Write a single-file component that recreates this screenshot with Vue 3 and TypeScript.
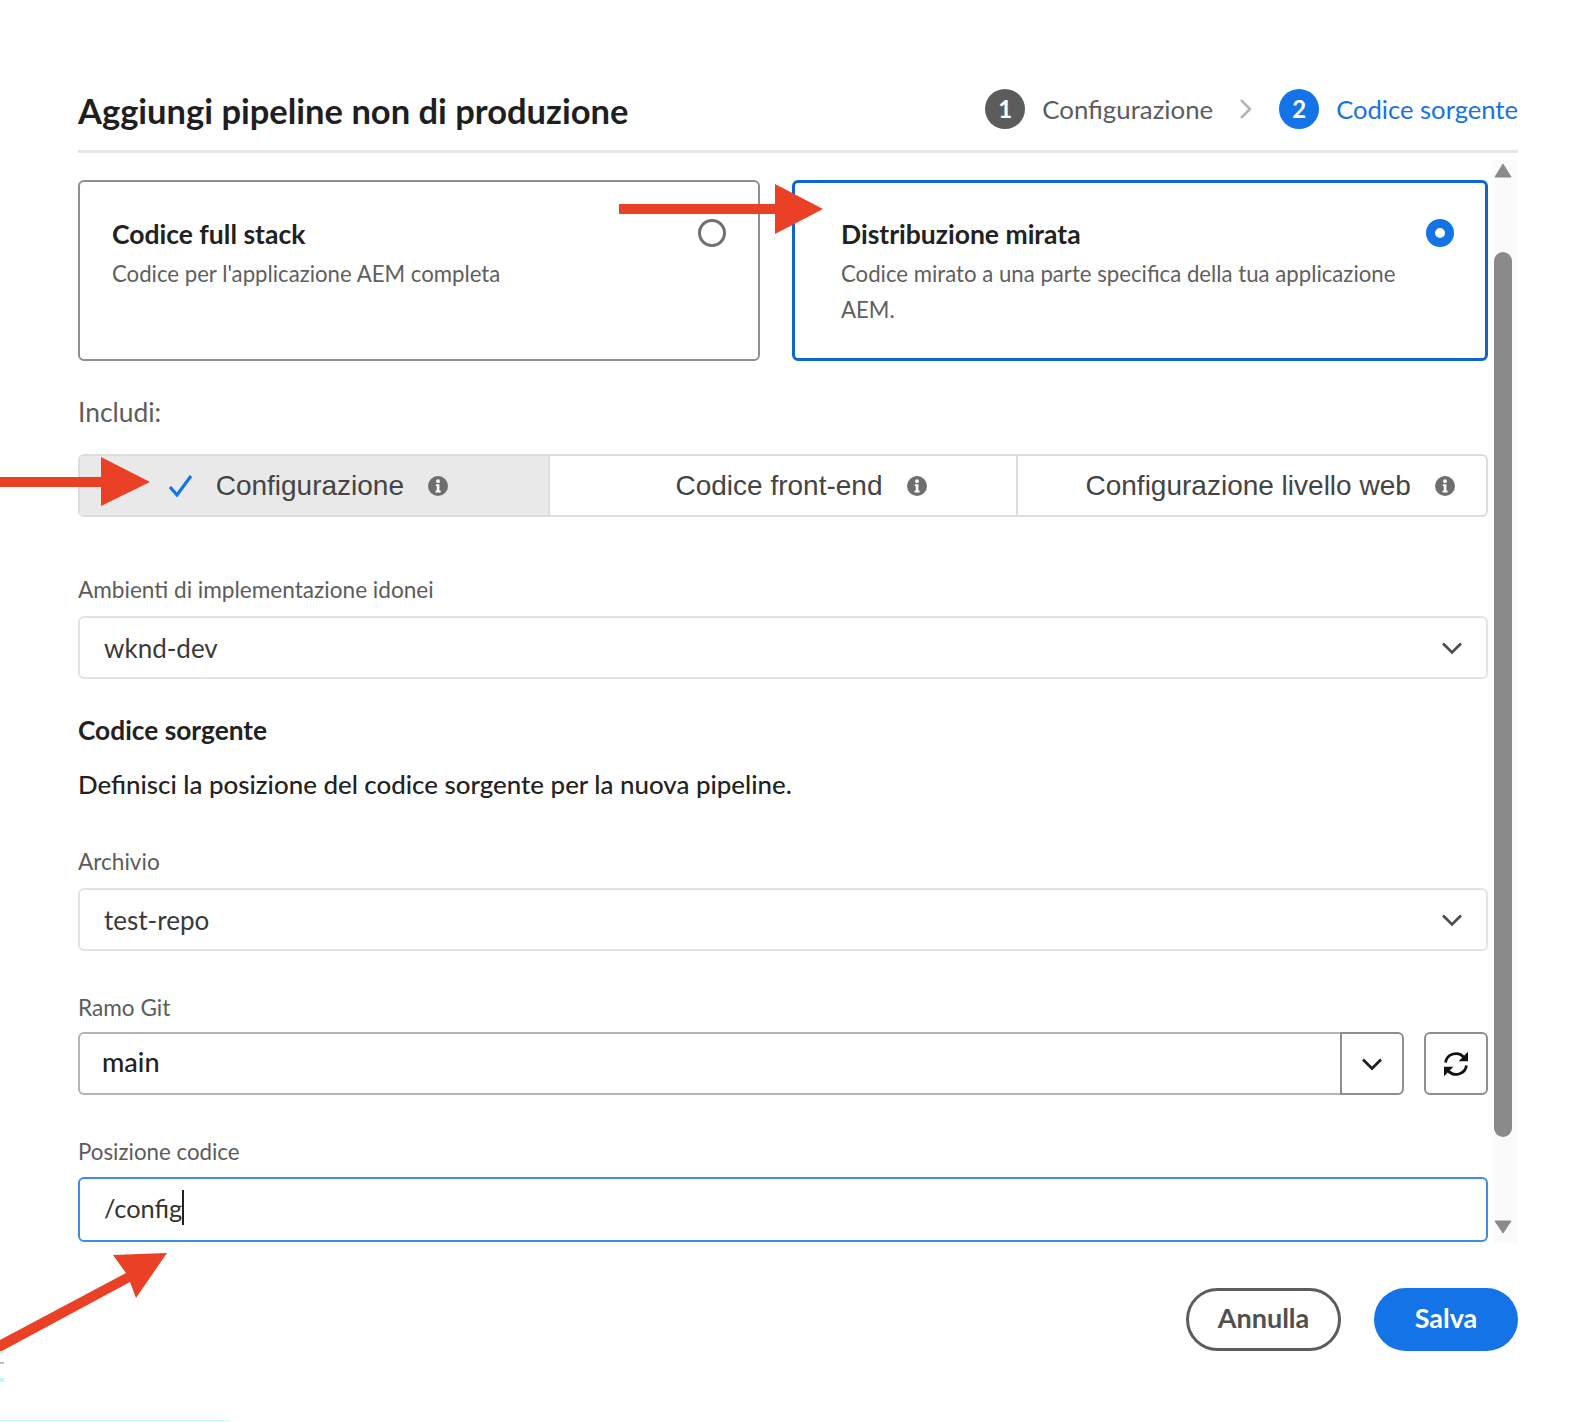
<script setup lang="ts">
interface Segment {
  label: string
  selected: boolean
}

const segments: Segment[] = [
  { label: 'Configurazione', selected: true },
  { label: 'Codice front-end', selected: false },
  { label: 'Configurazione livello web', selected: false }
]
</script>

<template>
  <div class="page">
    <header class="head">
      <h1 class="title">Aggiungi pipeline non di produzione</h1>
      <div class="steps">
        <span class="num">1</span>
        <span class="step-label">Configurazione</span>
        <svg class="step-sep" width="14" height="22" viewBox="0 0 14 22">
          <path d="M2 2l9 9-9 9" fill="none" stroke="#b5b5b5" stroke-width="2.6" />
        </svg>
        <span class="num active">2</span>
        <span class="step-label active">Codice sorgente</span>
      </div>
    </header>

    <div class="scroll">
      <div class="content">
        <div class="cards">
          <div class="card">
            <div class="card-text">
              <div class="card-title">Codice full stack</div>
              <div class="card-desc">Codice per l'applicazione AEM completa</div>
            </div>
            <span class="radio"></span>
          </div>
          <div class="card selected">
            <div class="card-text">
              <div class="card-title">Distribuzione mirata</div>
              <div class="card-desc">Codice mirato a una parte specifica della tua applicazione AEM.</div>
            </div>
            <span class="radio on"></span>
          </div>
        </div>

        <div class="include">Includi:</div>
        <div class="segments">
          <div v-for="seg in segments" :key="seg.label" class="seg" :class="{ selected: seg.selected }">
            <svg v-if="seg.selected" class="check" width="24" height="24" viewBox="0 0 24 24">
              <path d="M2 13l7 8L23 2" fill="none" stroke="#1473e6" stroke-width="3.2" />
            </svg>
            <span>{{ seg.label }}</span>
            <svg class="info" width="20" height="20" viewBox="0 0 20 20">
              <circle cx="10" cy="10" r="10" fill="#6e6e6e" />
              <circle cx="10" cy="5.2" r="1.9" fill="#fff" />
              <path d="M7.8 8.2h3.6v6.4h1.2v1.8H7.6v-1.8h1.2v-4.6h-1z" fill="#fff" />
            </svg>
          </div>
        </div>

        <div class="label l-env">Ambienti di implementazione idonei</div>
        <div class="select s-env">
          <span>wknd-dev</span>
          <svg class="chev" width="22" height="14" viewBox="0 0 22 14">
            <path d="M2 2.5l9 9 9-9" fill="none" stroke="#4b4b4b" stroke-width="2.6" />
          </svg>
        </div>

        <h2 class="section">Codice sorgente</h2>
        <p class="intro">Definisci la posizione del codice sorgente per la nuova pipeline.</p>

        <div class="label l-repo">Archivio</div>
        <div class="select s-repo">
          <span>test-repo</span>
          <svg class="chev" width="22" height="14" viewBox="0 0 22 14">
            <path d="M2 2.5l9 9 9-9" fill="none" stroke="#4b4b4b" stroke-width="2.6" />
          </svg>
        </div>

        <div class="label l-branch">Ramo Git</div>
        <div class="branch-row">
          <div class="combo">
            <div class="combo-value">main</div>
            <div class="combo-btn">
              <svg width="22" height="14" viewBox="0 0 22 14">
                <path d="M2 2.5l9 9 9-9" fill="none" stroke="#222" stroke-width="2.8" />
              </svg>
            </div>
          </div>
          <div class="refresh">
            <svg width="28" height="28" viewBox="0 0 28 28">
              <path d="M3.5 12.5A10.5 10.5 0 0 1 22 7.5" fill="none" stroke="#111" stroke-width="2.8" />
              <path d="M26 1.8v9.4h-9.4z" fill="#111" />
              <path d="M24.5 15.5A10.5 10.5 0 0 1 6 20.5" fill="none" stroke="#111" stroke-width="2.8" />
              <path d="M2 26.2v-9.4h9.4z" fill="#111" />
            </svg>
          </div>
        </div>

        <div class="label l-path">Posizione codice</div>
        <div class="path-input"><span>/config</span><i class="caret"></i></div>
      </div>

      <div class="scrollbar">
        <svg class="sb-up" width="18" height="15" viewBox="0 0 18 15">
          <path d="M9 1l8 13H1z" fill="#8a8a8a" stroke="#8a8a8a" stroke-linejoin="round" />
        </svg>
        <div class="thumb"></div>
        <svg class="sb-down" width="18" height="14" viewBox="0 0 18 14">
          <path d="M1 1h16L9 13z" fill="#8a8a8a" stroke="#8a8a8a" stroke-linejoin="round" />
        </svg>
      </div>
    </div>

    <footer class="foot">
      <button class="btn cancel" type="button">Annulla</button>
      <button class="btn save" type="button">Salva</button>
    </footer>

    <!-- annotation arrows drawn over the screenshot -->
    <svg class="arrows" width="1588" height="1422" viewBox="0 0 1588 1422">
      <path d="M619 204h156v-20l48 25-48 25v-20H619z" fill="#ea4025" />
      <path d="M0 477h101v-20l49 25-49 24v-19H0z" fill="#ea4025" />
      <path d="M0 1340L126 1273L113 1255L167 1253L136 1298L130 1282L0 1352z" fill="#ea4025" />
      <rect x="0" y="1351" width="4" height="2" fill="#b5fbfb" />
      <rect x="0" y="1362" width="4" height="2" fill="#d9a8f5" />
      <rect x="0" y="1378" width="4" height="4" fill="#b5fbfb" />
    </svg>
    <div class="scan-line"></div>
  </div>
</template>

<style scoped>
* {
  box-sizing: border-box;
}

.page {
  position: relative;
  width: 1588px;
  height: 1422px;
  padding: 70px 70px 0 78px;
  background: #fff;
  font-family: Lato, "Noto Sans", sans-serif;
  overflow: hidden;
}

.head {
  display: flex;
  align-items: center;
  justify-content: space-between;
  height: 83px;
  padding-bottom: 3px;
  border-bottom: 3px solid #e6e6e6;
}

.title {
  position: relative;
  top: 2px;
  margin: 0;
  font-size: 34.5px;
  font-weight: 700;
  color: #1f1f1f;
}

.steps {
  display: flex;
  align-items: center;
}

.num {
  display: flex;
  align-items: center;
  justify-content: center;
  width: 40px;
  height: 40px;
  border-radius: 50%;
  background: #5c5c5c;
  color: #fff;
  font-size: 24px;
  font-weight: 700;
}

.num.active {
  background: #1473e6;
}

.step-label {
  margin-left: 17px;
  font-size: 25.8px;
  color: #5c5c5c;
}

.step-label.active {
  font-size: 25.6px;
  color: #1473e6;
}

.step-sep {
  margin: 0 26px;
}

.scroll {
  display: flex;
  gap: 6px;
  height: 1083px;
  margin-top: 7px;
}

.content {
  width: 1410px;
  padding-top: 20px;
}

.cards {
  display: flex;
  gap: 32px;
}

.card {
  display: flex;
  justify-content: space-between;
  width: 682px;
  height: 181px;
  padding: 34px 32px 0 32px;
  border: 2px solid #8e8e8e;
  border-radius: 6px;
}

.card.selected {
  width: 696px;
  padding: 33px 31px 0 46px;
  border: 3px solid #0f64d2;
}

.card-title {
  font-size: 26.5px;
  line-height: 36px;
  font-weight: 700;
  color: #222;
}

.card-desc {
  margin-top: 4px;
  font-size: 22.2px;
  line-height: 36px;
  color: #606060;
}

.card.selected .card-text {
  width: 570px;
}

.radio {
  flex: none;
  width: 28px;
  height: 28px;
  margin-top: 3px;
  border: 3px solid #707070;
  border-radius: 50%;
}

.radio.on {
  border: 9px solid #1473e6;
}

.include {
  margin-top: 31px;
  font-size: 26.4px;
  line-height: 40px;
  color: #5c5c5c;
}

.segments {
  display: grid;
  grid-template-columns: 469fr 470fr 471fr;
  height: 63px;
  margin-top: 22px;
  border: 2px solid #dcdcdc;
  border-radius: 6px;
  font-family: "Liberation Sans", Arial, sans-serif;
  font-size: 28px;
  color: #444;
}

.seg {
  display: flex;
  align-items: center;
  justify-content: center;
  gap: 24px;
  padding-left: 36px;
  border-left: 2px solid #dcdcdc;
}

.seg.selected {
  padding: 0 12px 0 0;
  border-left: 0;
  background: #e9e9e9;
}

.label {
  font-size: 22.6px;
  line-height: 30px;
  color: #5c5c5c;
}

.l-env {
  margin-top: 58px;
}

.l-repo {
  margin-top: 45px;
}

.l-branch {
  margin-top: 42px;
}

.l-path {
  margin-top: 42px;
  font-size: 22.3px;
}

.select {
  display: flex;
  align-items: center;
  justify-content: space-between;
  height: 63px;
  padding: 0 23px 0 24px;
  border: 2px solid #e4e4e4;
  border-radius: 6px;
  font-size: 26px;
  color: #3a3a3a;
}

.s-env {
  margin-top: 11px;
}

.s-repo {
  margin-top: 11px;
}

.section {
  margin: 33px 0 0;
  font-size: 26.3px;
  line-height: 36px;
  font-weight: 700;
  color: #222;
}

.intro {
  margin: 18px 0 0;
  font-size: 25.9px;
  line-height: 36px;
  font-weight: 500;
  color: #222;
}

.branch-row {
  display: flex;
  justify-content: space-between;
  margin-top: 9px;
}

.combo {
  display: flex;
  width: 1326px;
  height: 63px;
}

.combo-value {
  display: flex;
  flex: 1;
  align-items: center;
  padding: 0 0 5px 22px;
  border: 2px solid #b4b4b4;
  border-right: 0;
  border-radius: 6px 0 0 6px;
  font-size: 27px;
  font-weight: 500;
  color: #222;
}

.combo-btn,
.refresh {
  display: flex;
  align-items: center;
  justify-content: center;
  width: 64px;
  height: 63px;
  border: 2px solid #8e8e8e;
}

.combo-btn {
  border-radius: 0 6px 6px 0;
}

.refresh {
  border-radius: 6px;
}

.path-input {
  display: flex;
  align-items: center;
  height: 65px;
  margin-top: 10px;
  padding: 0 0 4px 24px;
  border: 2px solid #3f8ce8;
  border-radius: 6px;
  font-size: 25.4px;
  color: #333;
}

.caret {
  width: 2px;
  height: 35px;
  background: #222;
}

.scrollbar {
  display: flex;
  flex-direction: column;
  width: 24px;
  padding-top: 3px;
  background: #fafafa;
}

.thumb {
  width: 18px;
  height: 885px;
  margin-top: 74px;
  border-radius: 9px;
  background: #8a8a8a;
}

.sb-down {
  margin-top: 83px;
}

.foot {
  display: flex;
  justify-content: flex-end;
  gap: 33px;
  margin-top: 45px;
}

.btn {
  height: 63px;
  padding-bottom: 5px;
  border-radius: 32px;
  font-family: Lato, "Noto Sans", sans-serif;
  font-size: 27px;
  font-weight: 700;
}

.cancel {
  width: 155px;
  border: 3px solid #5c5c5c;
  background: #fff;
  color: #505050;
}

.save {
  width: 144px;
  border: 0;
  background: #1473e6;
  color: #fff;
}

.arrows {
  position: absolute;
  top: 0;
  left: 0;
  pointer-events: none;
}

.scan-line {
  position: absolute;
  left: 0;
  bottom: 1px;
  width: 230px;
  height: 1px;
  background: #c4fbfb;
}
</style>

<style>
body {
  margin: 0;
}
</style>
